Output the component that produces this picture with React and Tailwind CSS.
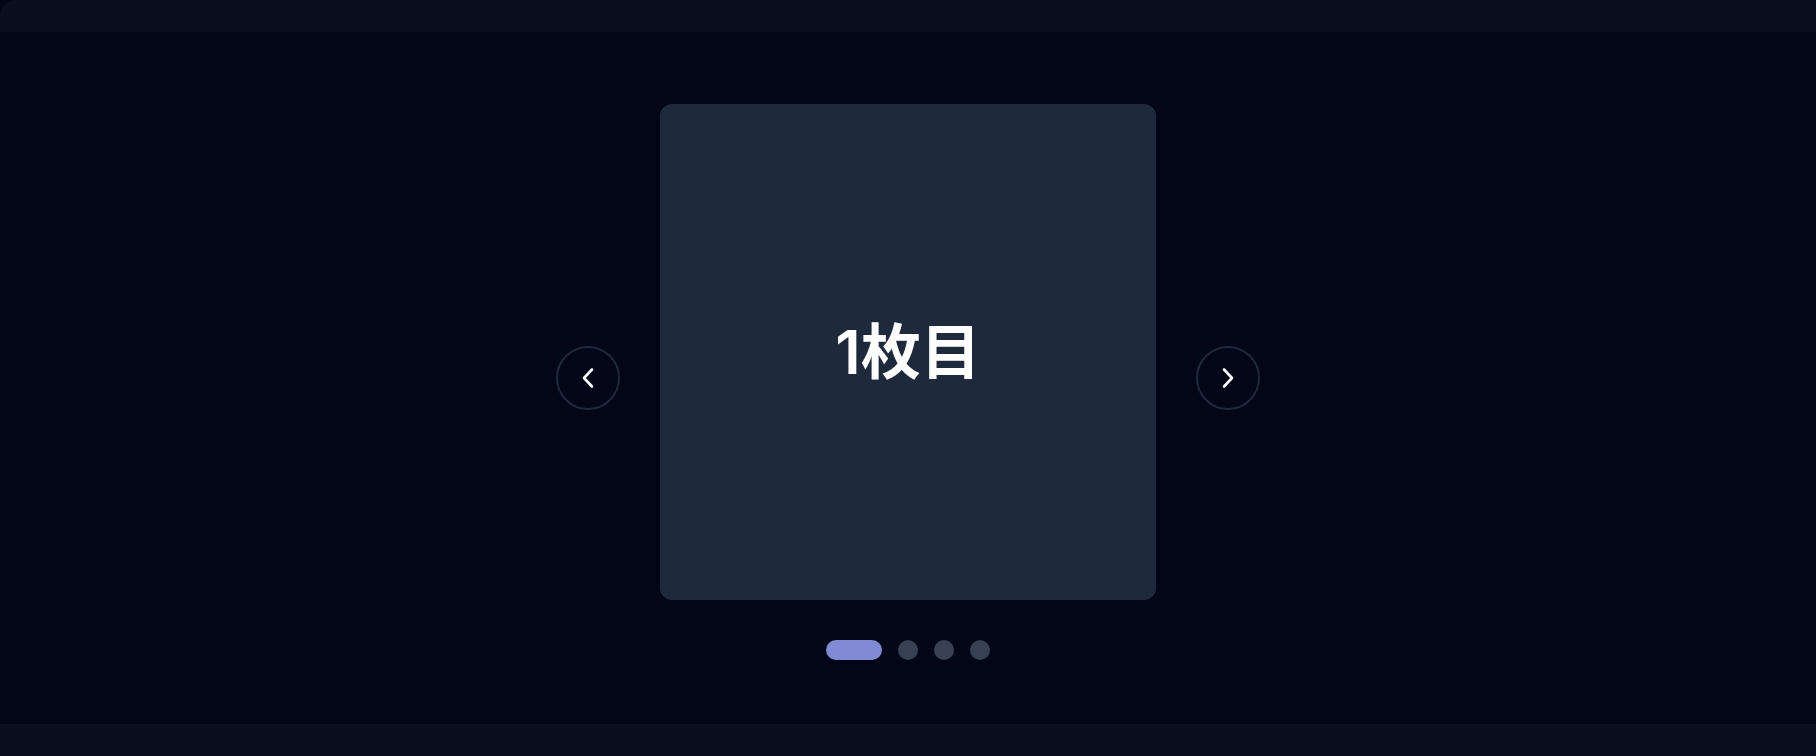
import React from "react";

function Chevron({ dir }) {
  return (
    <svg width="16" height="22" viewBox="0 0 16 22" fill="none" stroke="white" strokeWidth="2.6" strokeLinecap="round" strokeLinejoin="round">
      {dir === "left" ? <path d="M12 2.5 L4 11 L12 19.5" /> : <path d="M4 2.5 L12 11 L4 19.5" />}
    </svg>
  );
}

export default function App() {
  return (
    <div className="w-[1816px] h-[756px] bg-[#020617] flex flex-col" style={{ fontFamily: 'Inter, "Noto Sans CJK JP", sans-serif' }}>
      <div className="h-8 bg-[#0a0f1e] rounded-tl-2xl shrink-0" />
      <main className="flex-1 flex justify-center pt-[72px]">
        <div className="flex items-center gap-10 h-[556px]">
          <button className="w-16 h-16 mb-2 rounded-full border-2 border-[#1e293b] flex items-center justify-center">
            <Chevron dir="left" />
          </button>
          <div className="flex flex-col items-center">
            <div className="w-[496px] h-[496px] rounded-xl bg-[#1e293b] flex items-center justify-center">
              <span className="text-6xl leading-none font-semibold text-white" style={{ fontFamily: 'Inter, "Noto Sans CJK JP", sans-serif' }}>1枚目</span>
            </div>
            <div className="flex items-center gap-4 mt-10">
              <div className="w-14 h-5 rounded-full bg-[#818bd4]" />
              <div className="w-5 h-5 rounded-full bg-[#374151]" />
              <div className="w-5 h-5 rounded-full bg-[#374151]" />
              <div className="w-5 h-5 rounded-full bg-[#374151]" />
            </div>
          </div>
          <button className="w-16 h-16 mb-2 rounded-full border-2 border-[#1e293b] flex items-center justify-center">
            <Chevron dir="right" />
          </button>
        </div>
      </main>
      <div className="h-8 bg-[#0a0f1e] shrink-0" />
    </div>
  );
}
